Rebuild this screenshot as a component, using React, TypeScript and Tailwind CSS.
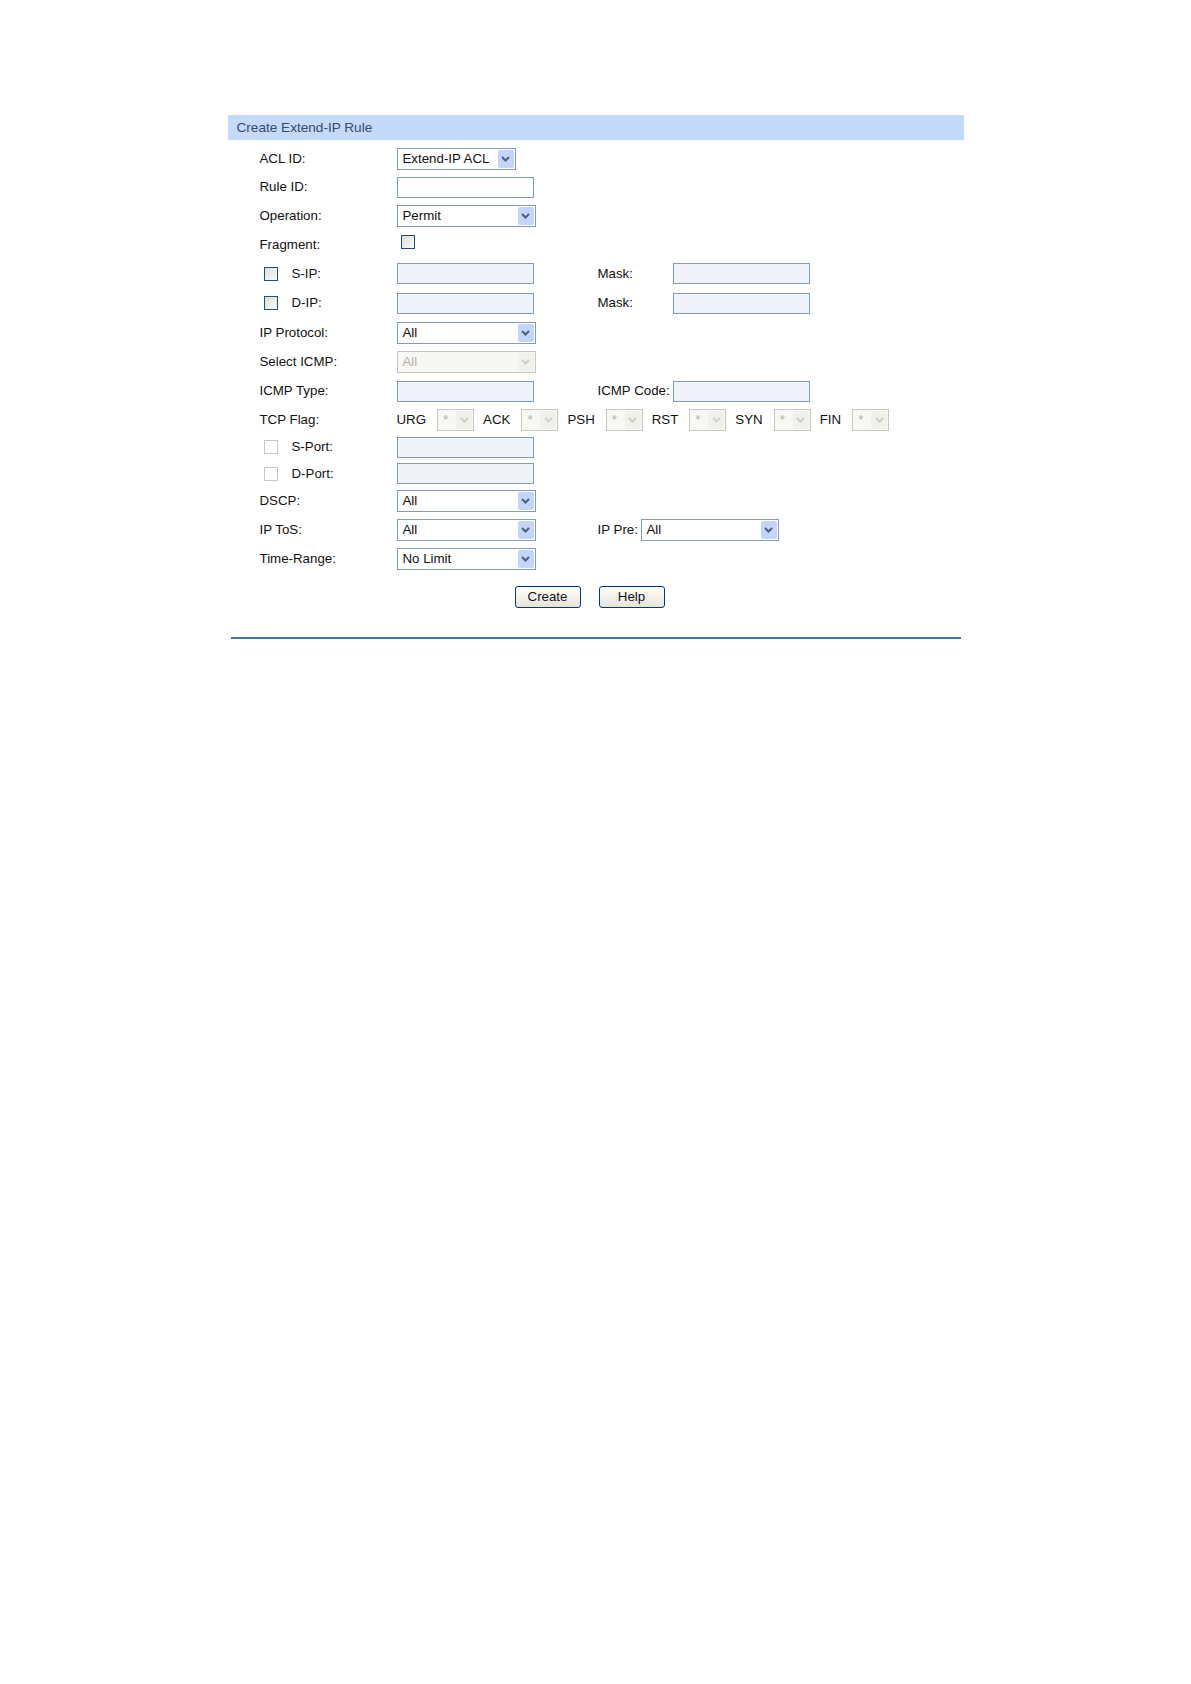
import React from 'react';

const Chevron = ({ disabled }: { disabled?: boolean }) => (
  <svg width="9" height="6" viewBox="0 0 9 6">
    <path d="M1 1l3.5 3.5L8 1" fill="none" stroke={disabled ? '#cfcfc8' : '#4a5f88'} strokeWidth="2" />
  </svg>
);

function Select({ value, className, disabled }: { value: string; className: string; disabled?: boolean }) {
  return (
    <div
      className={`flex h-[22px] items-stretch border p-px ${
        disabled ? 'border-[#c9c7ba] bg-[#f7f7f4]' : 'border-[#7f9db9] bg-white'
      } ${className}`}
    >
      <span className={`flex-1 overflow-hidden whitespace-nowrap pl-[4px] leading-[18px] ${disabled ? 'text-[#b5b3a8]' : 'text-[#111]'}`}>
        {value}
      </span>
      <span
        className={`flex w-[16px] items-center justify-center rounded-[2px] ${
          disabled ? 'bg-[#f1f1ec]' : 'bg-[#c4d5fb]'
        }`}
      >
        <Chevron disabled={disabled} />
      </span>
    </div>
  );
}

function Input({ white }: { white?: boolean }) {
  return <div className={`h-[21px] w-[137px] border border-[#7f9db9] ${white ? 'bg-white' : 'bg-[#f1f3fb]'}`} />;
}

function Check({ disabled }: { disabled?: boolean }) {
  return (
    <span
      className={`inline-block h-[14px] w-[14px] border ${
        disabled
          ? 'border-[#cac8bb] bg-white'
          : 'border-[#1c5180] bg-gradient-to-br from-[#dcdcd7] to-[#fbfbf9]'
      }`}
    />
  );
}

function Row({ h, children }: { h: string; children: React.ReactNode }) {
  return <div className={`flex items-center ${h}`}>{children}</div>;
}

const Label = ({ children }: { children: React.ReactNode }) => (
  <div className="w-[169px] shrink-0 pl-[32px]">{children}</div>
);

const CheckLabel = ({ text, disabled }: { text: string; disabled?: boolean }) => (
  <div className="flex w-[169px] shrink-0 items-center pl-[36px]">
    <Check disabled={disabled} />
    <span className="ml-[14px]">{text}</span>
  </div>
);

const Ctrl = ({ children }: { children: React.ReactNode }) => (
  <div className="flex w-[201px] shrink-0 items-center">{children}</div>
);

const flags = ['URG', 'ACK', 'PSH', 'RST', 'SYN', 'FIN'];

export default function App() {
  return (
    <div className="min-h-[1684px] w-full bg-white pt-[115px] font-['Liberation_Sans',Arial,sans-serif] text-[13.3px] text-[#111]">
      <div className="mx-auto w-[736px]">
        <div className="h-[25px] bg-[#c5d9fb] pl-[9px] text-[13.6px] leading-[25px] text-[#344a70]">Create Extend-IP Rule</div>
        <div className="pt-[4px]">
          <Row h="h-[29px]">
            <Label>ACL ID:</Label>
            <Select value="Extend-IP ACL" className="w-[119px]" />
          </Row>
          <Row h="h-[28px]">
            <Label>Rule ID:</Label>
            <Input white />
          </Row>
          <Row h="h-[29px]">
            <Label>Operation:</Label>
            <Select value="Permit" className="w-[139px]" />
          </Row>
          <Row h="h-[29px]">
            <Label>Fragment:</Label>
            <div className="pl-[4px]">
              <Check />
            </div>
          </Row>
          <Row h="h-[29px]">
            <CheckLabel text="S-IP:" />
            <Ctrl>
              <Input />
            </Ctrl>
            <div className="w-[75px]">Mask:</div>
            <Input />
          </Row>
          <Row h="h-[30px]">
            <CheckLabel text="D-IP:" />
            <Ctrl>
              <Input />
            </Ctrl>
            <div className="w-[75px]">Mask:</div>
            <Input />
          </Row>
          <Row h="h-[29px]">
            <Label>IP Protocol:</Label>
            <Select value="All" className="w-[139px]" />
          </Row>
          <Row h="h-[29px]">
            <Label>Select ICMP:</Label>
            <Select value="All" className="w-[139px]" disabled />
          </Row>
          <Row h="h-[30px]">
            <Label>ICMP Type:</Label>
            <Ctrl>
              <Input />
            </Ctrl>
            <div className="w-[75px] whitespace-nowrap">ICMP Code:</div>
            <Input />
          </Row>
          <Row h="h-[28px]">
            <Label>TCP Flag:</Label>
            <div className="flex items-center">
              {flags.map((f) => (
                <div key={f} className="mr-[9px] flex items-center">
                  <span className="mr-[11px]">{f}</span>
                  <Select value="*" className="w-[37px]" disabled />
                </div>
              ))}
            </div>
          </Row>
          <Row h="h-[26px]">
            <CheckLabel text="S-Port:" disabled />
            <Input />
          </Row>
          <Row h="h-[27px]">
            <CheckLabel text="D-Port:" disabled />
            <Input />
          </Row>
          <Row h="h-[28px]">
            <Label>DSCP:</Label>
            <Select value="All" className="w-[139px]" />
          </Row>
          <Row h="h-[29px]">
            <Label>IP ToS:</Label>
            <Ctrl>
              <Select value="All" className="w-[139px]" />
            </Ctrl>
            <div className="w-[43px]">IP Pre:</div>
            <Select value="All" className="w-[138px]" />
          </Row>
          <Row h="h-[29px]">
            <Label>Time-Range:</Label>
            <Select value="No Limit" className="w-[139px]" />
          </Row>
        </div>
        <div className="mt-[13px] flex gap-[18px] pl-[287px]">
          {['Create', 'Help'].map((b) => (
            <button
              key={b}
              className="h-[22px] w-[66px] rounded-[3px] border border-[#003c74] bg-gradient-to-b from-white to-[#e6e3d6] text-[13.3px] text-[#111]"
            >
              {b}
            </button>
          ))}
        </div>
        <div className="mx-[3px] mt-[29px] h-[2px] bg-[#3b76ad]" />
      </div>
    </div>
  );
}
